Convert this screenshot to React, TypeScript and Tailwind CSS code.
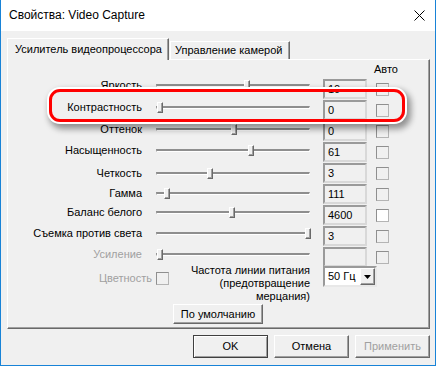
import React from "react";

type Row = { label: string; val: string; thumb: number; mt: string; disabled?: boolean; white?: boolean };

const rows: Row[] = [
  { label: "Яркость", val: "10", thumb: 88, mt: "mt-0" },
  { label: "Контрастность", val: "0", thumb: 1, mt: "mt-[4px]" },
  { label: "Оттенок", val: "0", thumb: 75, mt: "mt-[4px]" },
  { label: "Насыщенность", val: "61", thumb: 92, mt: "mt-[3px]" },
  { label: "Четкость", val: "3", thumb: 51, mt: "mt-[5px]" },
  { label: "Гамма", val: "111", thumb: 8, mt: "mt-[2px]" },
  { label: "Баланс белого", val: "4600", thumb: 73, mt: "mt-[1px]", white: true },
  { label: "Съемка против света", val: "3", thumb: 149, mt: "mt-[3px]" },
  { label: "Усиление", val: "", thumb: 1, mt: "mt-[3px]", disabled: true },
];

const raised =
  "border border-t-white border-l-white border-r-[#696969] border-b-[#696969] shadow-[inset_-1px_-1px_0_#a0a0a0]";

function Slider({ thumb }: { thumb: number }) {
  return (
    <div className="relative w-[154px] h-[18px] flex items-center">
      <div className="w-full h-[3px] border-t-2 border-t-[#8e8e8e] border-b border-b-white border-l border-l-[#a0a0a0] border-r border-r-white" />
      <div
        className="absolute top-[4px] w-[6px] h-[11px] bg-[#f0f0f0] border border-t-white border-l-white border-r-[#696969] border-b-[#696969] shadow-[inset_-1px_-1px_0_#a0a0a0]"
        style={{ left: thumb }}
      />
    </div>
  );
}

function Check({ white }: { white?: boolean }) {
  return (
    <div
      className={
        "w-[13px] h-[13px] border border-t-[#8f8f8f] border-l-[#8f8f8f] border-r-[#b4b4b4] border-b-[#b4b4b4] " +
        (white ? "bg-white" : "bg-[#f0f0f0]")
      }
    />
  );
}

function Btn({ children, cls, disabled, def }: { children: React.ReactNode; cls: string; disabled?: boolean; def?: boolean }) {
  return (
    <div
      className={
        cls +
        " flex items-center justify-center bg-[#f0f0f0] " +
        (def
          ? "border border-[#404040] shadow-[inset_1px_1px_0_#fff,inset_-1px_-1px_0_#a0a0a0]"
          : raised) +
        (disabled ? " text-[#a0a0a0]" : " text-black")
      }
    >
      {children}
    </div>
  );
}

export default function App() {
  return (
    <div className="relative w-[436px] h-[366px] flex flex-col bg-[#f0f0f0] border-l border-r border-b border-[#1883d7] font-['Liberation_Sans',Arial,sans-serif] text-[11px] leading-[13px] text-black overflow-hidden">
      {/* title bar */}
      <div className="h-[31px] shrink-0 bg-white flex items-center justify-between pl-[8px] pr-[10px]">
        <span className="text-[12px] text-black -mt-[1px]">Свойства: Video Capture</span>
        <svg width="11" height="11" viewBox="0 0 11 11" className="-mt-[1px]">
          <path d="M0.5 0.5 L10.5 10.5 M10.5 0.5 L0.5 10.5" stroke="#000" strokeWidth="1" />
        </svg>
      </div>

      <div className="flex flex-col pl-[6px] pr-[5px] pt-[7px]">
        {/* tabs */}
        <div className="flex items-end h-[21px] relative z-10">
          <div className="w-[162px] h-[22px] -mb-[1px] bg-[#f0f0f0] border-l border-t border-l-white border-t-white border-r border-r-[#696969] shadow-[inset_-1px_0_0_#a0a0a0] pl-[7px] pt-[4px]">
            Усилитель видеопроцессора
          </div>
          <div className="w-[120px] h-[18px] ml-[1px] bg-[#f0f0f0] border-l border-t border-l-white border-t-white border-r border-r-[#696969] shadow-[inset_-1px_0_0_#a0a0a0] pl-[4px] pt-[2px]">
            Управление камерой
          </div>
        </div>

        {/* panel */}
        <div className="w-[423px] h-[270px] border-l border-t border-l-white border-t-white border-r border-b border-r-[#696969] border-b-[#696969] shadow-[inset_-1px_-1px_0_#a0a0a0] flex">
          {/* left column */}
          <div className="w-[302px] flex flex-col pt-[16px]">
            {rows.map((r) => (
              <div key={r.label} className={"flex items-center h-[18px] " + r.mt}>
                <div className={"w-[134px] text-right " + (r.disabled ? "text-[#a0a0a0]" : "text-black")}>{r.label}</div>
                <div className="ml-[14px]">
                  <Slider thumb={r.thumb} />
                </div>
              </div>
            ))}
            <div className="flex mt-[1px]">
              <div className="flex items-center mt-[8px] h-[13px]">
                <div className="w-[144px] text-right text-[#a0a0a0]">Цветность</div>
                <div className="ml-[4px]">
                  <Check />
                </div>
              </div>
              <div className="ml-auto text-right">
                Частота линии питания
                <br />
                (предотвращение
                <br />
                мерцания)
              </div>
            </div>
            <Btn cls="ml-[165px] mt-[1px] w-[90px] h-[20px]">По умолчанию</Btn>
          </div>

          {/* right column */}
          <div className="flex flex-col pl-[13px] pt-[3px]">
            <div className="h-[13px] pl-[51px]">Авто</div>
            <div className="flex flex-col gap-[1px] mt-[3px]">
              {rows.map((r) => (
                <div key={r.label} className="flex items-center h-[20px]">
                  <div className="w-[44px] h-[20px] border-2 border-t-[#9a9a9a] border-l-[#9a9a9a] border-r-[#d8d8d8] border-b-[#d8d8d8] bg-[#f0f0f0] pl-[3px] flex items-center">
                    {r.val}
                  </div>
                  <div className="ml-[9px]">
                    <Check white={r.white} />
                  </div>
                </div>
              ))}
            </div>
            <div className="-mt-[1px] w-[54px] h-[21px] border-2 border-t-[#9a9a9a] border-l-[#9a9a9a] border-r-[#e8e8e8] border-b-[#e8e8e8] bg-white flex items-center justify-between">
              <span className="pl-[3px]">50 Гц</span>
              <div className={"w-[15px] h-[17px] bg-[#f0f0f0] flex items-center justify-center " + raised}>
                <svg width="7" height="4" viewBox="0 0 7 4">
                  <path d="M0 0 H7 L3.5 4 Z" fill="#000" />
                </svg>
              </div>
            </div>
          </div>
        </div>

        {/* bottom buttons */}
        <div className="flex justify-end gap-[6px] mt-[6px]">
          <Btn cls="w-[75px] h-[23px]" def>
            OK
          </Btn>
          <Btn cls="w-[75px] h-[23px]">Отмена</Btn>
          <Btn cls="w-[75px] h-[23px]" disabled>
            Применить
          </Btn>
        </div>
      </div>

      {/* red highlight overlay */}
      <div className="absolute left-[48px] top-[89px] w-[356px] h-[33px] rounded-[11px] border-[3px] border-[#ff0000] shadow-[0_0_0_2px_#ffffff,3px_4px_6px_3px_rgba(0,0,0,0.4)] pointer-events-none" />
    </div>
  );
}
